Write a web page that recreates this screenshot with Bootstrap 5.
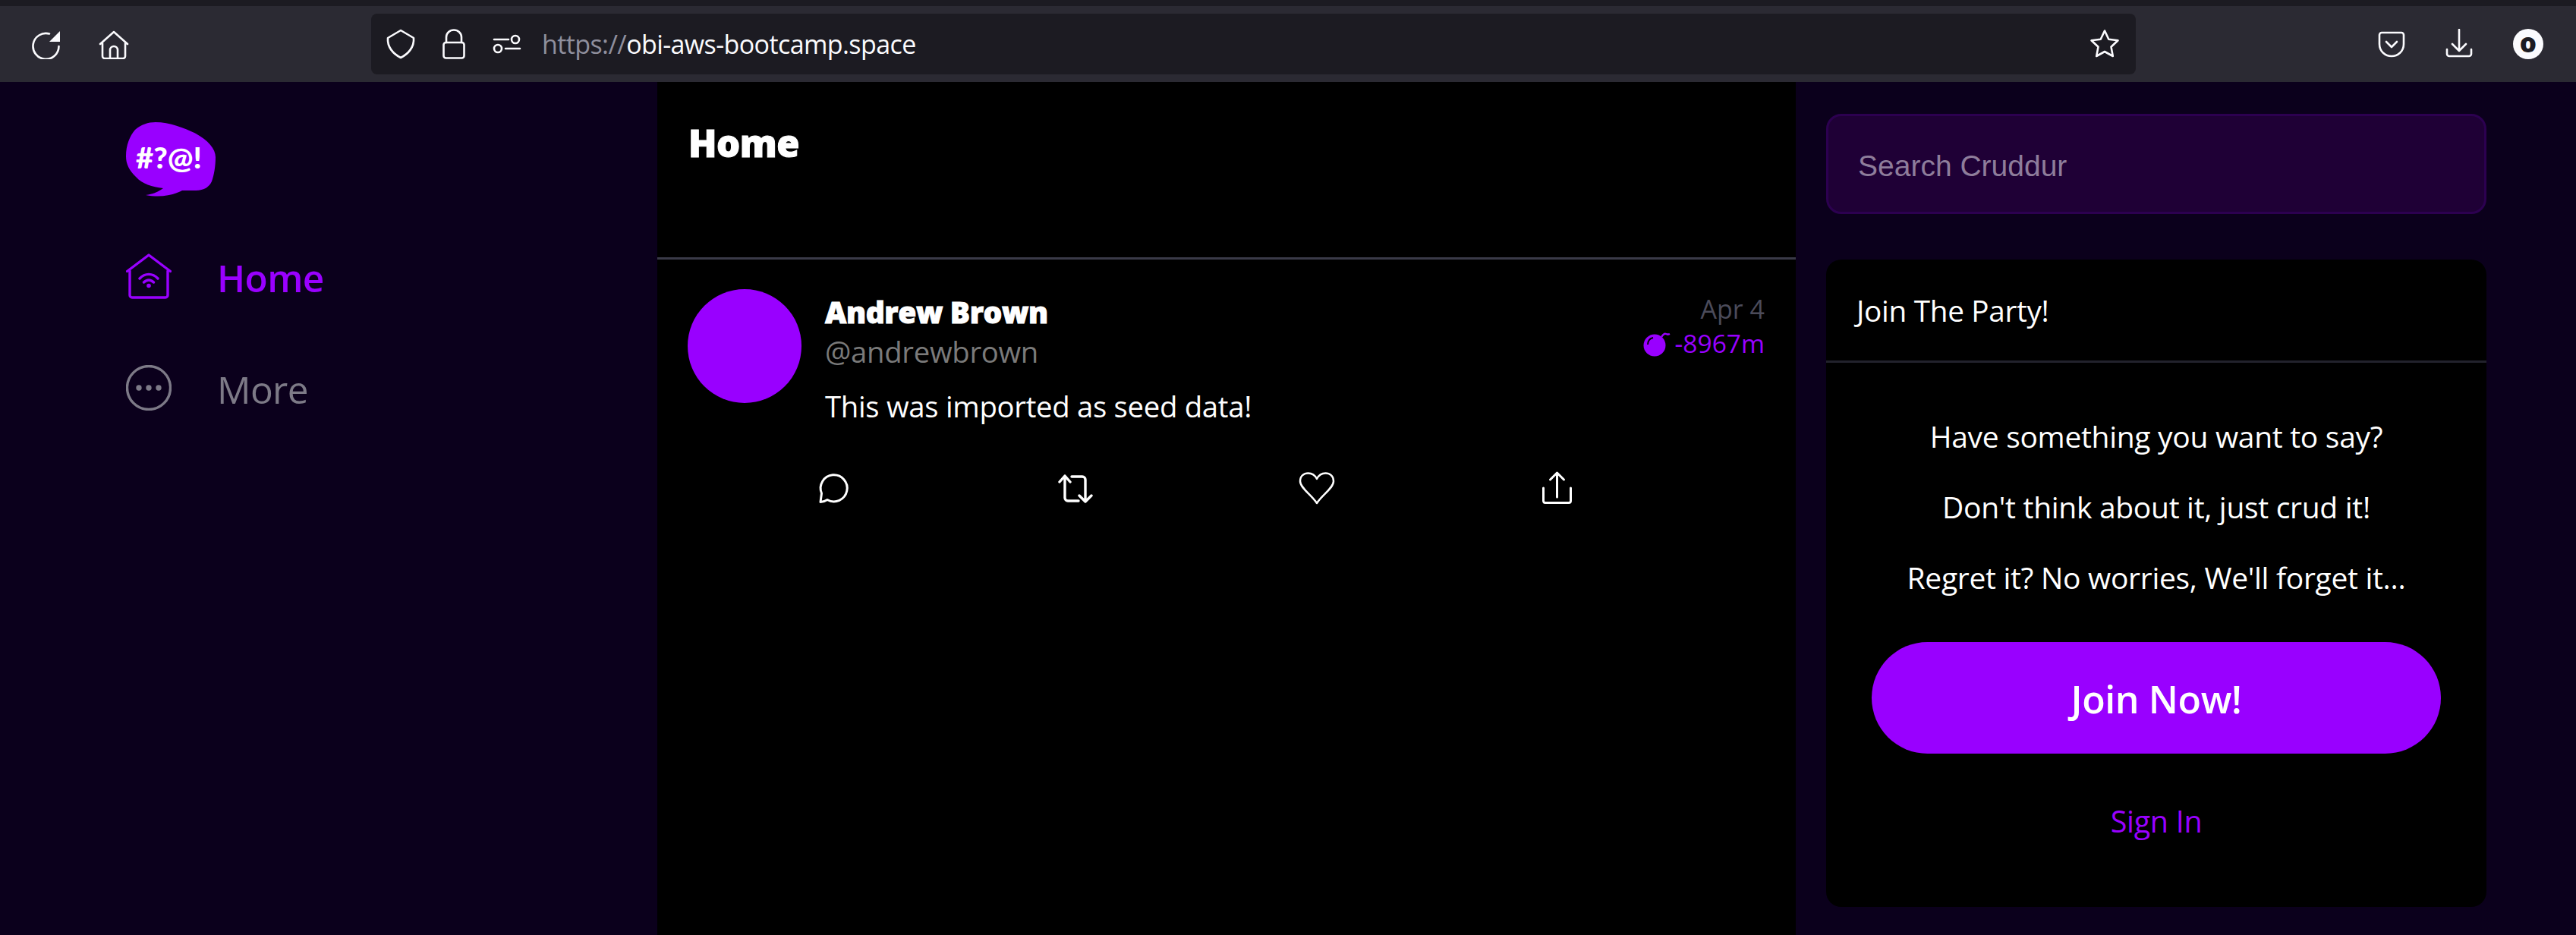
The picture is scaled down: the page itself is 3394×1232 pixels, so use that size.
<!DOCTYPE html>
<html lang="en">
<head>
  <meta charset="UTF-8">
  <title>Cruddur - Home</title>
  <link href="https://cdn.jsdelivr.net/npm/bootstrap@5.3.0/dist/css/bootstrap.min.css" rel="stylesheet">
  <style>
    html, body { height: 100%; }
    body { background: #0b001c; overflow: hidden; font-family: "Open Sans", sans-serif; color: #fff; }

    /* browser chrome */
    .tab-strip { height: 8px; background: #1c1b22; }
    .tool-bar { height: 100px; background: #2b2a33; padding: 0 43px 0 41px; }
    .tool-ico { width: 40px; height: 40px; flex: none; fill: none; stroke: #fbfbfe; stroke-width: 2.6; stroke-linecap: round; stroke-linejoin: round; }
    .tool-ico .solid { fill: #fbfbfe; stroke: none; }
    .gap-nav { margin-left: 49px; }
    .gap-url { margin-left: 30px; }
    .gap-acct { margin-left: 51px; }
    .url-bar { width: 2325px; height: 80px; background: #1c1b22; border-radius: 8px; margin: 0 317px 0 319px; padding: 0 21px 0 19px; }
    .url-text { font-size: 34px; margin-left: 26px; letter-spacing: -.6px; color: #fbfbfe; }
    .url-text span { color: #8f8f9d; }
    .acct-dot { width: 40px; height: 40px; flex: none; background: #fbfbfe; color: #1c1b22; font-weight: 800; font-size: 35px; line-height: 35px; text-align: center; border-radius: 50%; }

    /* page columns */
    .page-wrap { height: 1124px; }
    .side-col { width: 866px; flex: none; padding: 53px 0 0 166px; }
    .main-col { width: 1500px; flex: none; background: #000; }
    .right-col { flex: 1 1 auto; padding: 42px 119px 0 40px; }

    .brand-logo { width: 119px; height: 98px; display: block; margin-bottom: 75px; }
    .menu-item { font-size: 49.5px; line-height: 60px; height: 60px; gap: 60px; margin-bottom: 87px; color: #7d7a87; text-decoration: none; letter-spacing: -.6px; }
    .menu-item.active-item { color: #9900ff; font-weight: 600; }
    .menu-txt { padding-top: 3px; }
    .menu-ico { width: 60px; height: 60px; flex: none; fill: none; stroke: currentColor; stroke-width: 3.4; stroke-linecap: round; stroke-linejoin: round; }
    .menu-ico .solid { fill: currentColor; stroke: none; }

    .feed-head { height: 234px; padding: 46px 41px 0; border-bottom: 3px solid #3a3a48; }
    .feed-title { font-weight: 800; -webkit-text-stroke: 1px #fff; font-size: 49px; line-height: 68px; margin: 0; letter-spacing: -.5px; }

    .post-wrap { padding: 39px 41px 0 40px; gap: 31px; }
    .post-avatar { width: 150px; height: 150px; flex: none; background: #9900ff; border-radius: 50%; }
    .post-body { min-width: 0; }
    .post-name { font-weight: 800; -webkit-text-stroke: 1px #fff; font-size: 39px; line-height: 52px; margin-top: 4px; letter-spacing: -.4px; }
    .post-handle { font-size: 38.300px; line-height: 52px; color: #7a7a7a; letter-spacing: -.3px; }
    .post-date { font-size: 34px; line-height: 45px; color: #4b4b5a; text-align: right; margin-top: 4px; }
    .post-ttl { font-size: 33.500px; line-height: 45px; color: #9900ff; gap: 6px; }
    .bomb-ico { width: 36px; height: 36px; fill: #9900ff; stroke: #9900ff; }
    .post-msg { font-size: 38.300px; line-height: 52px; margin-top: 20px; letter-spacing: -.3px; }
    .post-actions { margin: 59px 0 0 -11px; width: 1272px; }
    .act-slot { width: 317.500px; flex: none; }
    .act-ico { width: 48px; height: 48px; display: block; fill: none; stroke: #fff; stroke-width: 3; stroke-linecap: round; stroke-linejoin: round; }
    .act-ico.thick-line { stroke-width: 3.400; }
    .act-ico.thin-line { stroke-width: 2.500; }

    .search-box { height: 132px; background: #1f0036; border: 3px solid #2c0050; border-radius: 20px; padding: 6px 39px 0; font-family: "Liberation Sans", sans-serif; font-size: 39px; color: #8e7d9b; }
    .join-card { height: 853px; margin-top: 60px; background: #000; border: 0; border-radius: 20px; }
    .join-head { height: 136px; padding: 2px 39px 0 40px; font-size: 38.700px; border-bottom: 3px solid #22222c; letter-spacing: -.3px; }
    .join-line { font-size: 39px; line-height: 52px; margin: 0 0 41px; text-align: center; letter-spacing: -.3px; }
    .join-body { padding: 71px 60px 0; }
    .join-btn { display: block; width: 750px; height: 147px; background: #9900ff; border: 0; border-radius: 74px; color: #fff; font-size: 50px; font-weight: 600; margin-top: 59px; padding-top: 10px; letter-spacing: -.4px; }
    .join-btn:hover { background: #9900ff; color: #fff; }
    .sign-link { display: block; text-align: center; font-size: 39.500px; line-height: 52px; margin-top: 63px; color: #9900ff; text-decoration: none; letter-spacing: -.3px; }
  </style>
</head>
<body>

  <!-- Browser chrome -->
  <div class="tab-strip"></div>
  <div class="tool-bar d-flex align-items-center">
    <svg class="tool-ico" viewBox="0 0 40 40"><path d="M36.500 23A17 17 0 1 1 24 6.500"/><path class="solid" d="M38 3v14H24z"/></svg>
    <svg class="tool-ico gap-nav" viewBox="0 0 40 40"><path d="M2 20 20 4l18 16M5 19v17a3 3 0 0 0 3 3h24a3 3 0 0 0 3-3V19M15 39V28a5 5 0 0 1 10 0v11"/></svg>
    <div class="url-bar d-flex align-items-center">
      <svg class="tool-ico" viewBox="0 0 40 40"><path d="M20 2 37 12c1 12-7 21-17 26C10 33 2 24 3 12z"/></svg>
      <svg class="tool-ico gap-url" viewBox="0 0 40 40"><rect x="6.500" y="18" width="27" height="20.500" rx="3"/><path d="M10 18V11a10 9.500 0 0 1 20 0v7"/></svg>
      <svg class="tool-ico gap-url" viewBox="0 0 40 40"><path d="M3 14h19M18 26h19"/><circle cx="31" cy="14" r="5"/><circle cx="8" cy="26" r="5"/></svg>
      <div class="url-text"><span>https://</span>obi-aws-bootcamp.space</div>
      <svg class="tool-ico ms-auto" viewBox="0 0 40 40"><path d="M20 2.500l5.300 11.200 12.200 1.600-9 8.500 2.300 12.200L20 30l-10.800 6 2.300-12.200-9-8.500 12.200-1.600z"/></svg>
    </div>
    <svg class="tool-ico" viewBox="0 0 40 40"><path d="M4 8a3 3 0 0 1 3-3h26a3 3 0 0 1 3 3v12c0 10-8 16-16 16S4 30 4 20zM13 17l7 7 7-7"/></svg>
    <svg class="tool-ico gap-nav" viewBox="0 0 40 40"><path d="M20 1v28M11 20l9 9 9-9M4 27v6a3 3 0 0 0 3 3h26a3 3 0 0 0 3-3v-6"/></svg>
    <div class="acct-dot gap-acct">o</div>
  </div>

  <div class="page-wrap d-flex">
    <!-- Left menu -->
    <nav class="side-col">
      <svg class="brand-logo" viewBox="0 0 119 98">
        <path fill="#9900ff" d="M39 0C58 0 80 9 92 15c16 9 26 20 26 31 0 12-2 24-5 32-3 7-10 12-21 12H74C62 96 46 100 26 96c10-1 18-5 23-9-15-2-27-5-36-15C4 63 0 55 0 45 0 30 5 18 12 10 20 3 29 0 39 0z"/>
        <text x="13" y="61" fill="#fff" font-family="Lato, sans-serif" font-weight="900" font-size="38" textLength="87" lengthAdjust="spacingAndGlyphs">#?@!</text>
      </svg>
      <a class="menu-item active-item d-flex align-items-center" href="#">
        <svg class="menu-ico" viewBox="0 0 60 60"><path d="M1.500 23.500 30 2l28.500 21.500M5 23v32a3 3 0 0 0 3 3h44a3 3 0 0 0 3-3V23M18 33c7-7.500 17-7.500 24 0M23.500 38c4-4 9-4 13 0"/><circle class="solid" cx="30" cy="42.500" r="2.800"/></svg>
        <span class="menu-txt">Home</span>
      </a>
      <a class="menu-item d-flex align-items-center" href="#">
        <svg class="menu-ico" viewBox="0 0 60 60"><circle cx="30" cy="30" r="28.500"/><circle class="solid" cx="17" cy="30" r="3.700"/><circle class="solid" cx="30" cy="30" r="3.700"/><circle class="solid" cx="43" cy="30" r="3.700"/></svg>
        <span class="menu-txt">More</span>
      </a>
    </nav>

    <!-- Feed -->
    <main class="main-col">
      <div class="feed-head"><h1 class="feed-title">Home</h1></div>
      <div class="post-wrap d-flex">
        <div class="post-avatar"></div>
        <div class="post-body flex-grow-1">
          <div class="d-flex justify-content-between">
            <div>
              <div class="post-name">Andrew Brown</div>
              <div class="post-handle">@andrewbrown</div>
            </div>
            <div>
              <div class="post-date">Apr 4</div>
              <div class="post-ttl d-flex align-items-center">
                <svg class="bomb-ico" viewBox="0 0 36 36"><circle cx="15" cy="20" r="14.500" stroke="none"/><path d="M24 9c2-3 4-5 6-4s3 1 5 0" fill="none" stroke-width="2.500"/><path d="M6 19c0-5 3-8 7-9" fill="none" stroke="#000" stroke-width="2"/></svg>
                <span>-8967m</span>
              </div>
            </div>
          </div>
          <div class="post-msg">This was imported as seed data!</div>
          <div class="post-actions d-flex">
            <div class="act-slot"><svg class="act-ico" viewBox="0 0 48 48"><path d="M14 38.500A17.500 17.500 0 1 0 6.500 30L5 41.500c3 0 6-1 9-3z"/></svg></div>
            <div class="act-slot"><svg class="act-ico thick-line" viewBox="1 0 48 48"><path d="M10 7v29a4 4 0 0 0 4 4h14M3 15l7-8 7 8M19 8h14a4 4 0 0 1 4 4v29M29 33l8 8 8-8"/></svg></div>
            <div class="act-slot"><svg class="act-ico thin-line" viewBox="0 0 48 48"><path d="M24 43C17 32 2 23 2 14 2 7 7 3.500 12.500 3.500S22 7 24 11c2-4 6-7.500 11.500-7.500S46 7 46 14c0 9-15 18-22 29z"/></svg></div>
            <div class="act-slot"><svg class="act-ico" viewBox="-1.500 0 48 48"><path d="M21 3v32M12 12l9-9 9 9M3 23v17a2.500 2.500 0 0 0 2.500 2.500h31a2.500 2.500 0 0 0 2.500-2.500V23"/></svg></div>
          </div>
        </div>
      </div>
    </main>

    <!-- Right column -->
    <aside class="right-col">
      <div class="search-box d-flex align-items-center">Search Cruddur</div>
      <div class="join-card card">
        <div class="join-head d-flex align-items-center">Join The Party!</div>
        <div class="join-body">
          <p class="join-line">Have something you want to say?</p>
          <p class="join-line">Don't think about it, just crud it!</p>
          <p class="join-line">Regret it? No worries, We'll forget it...</p>
          <button class="join-btn btn" type="button">Join Now!</button>
          <a class="sign-link" href="#">Sign In</a>
        </div>
      </div>
    </aside>
  </div>

  <script src="https://cdn.jsdelivr.net/npm/bootstrap@5.3.0/dist/js/bootstrap.bundle.min.js"></script>
</body>
</html>
